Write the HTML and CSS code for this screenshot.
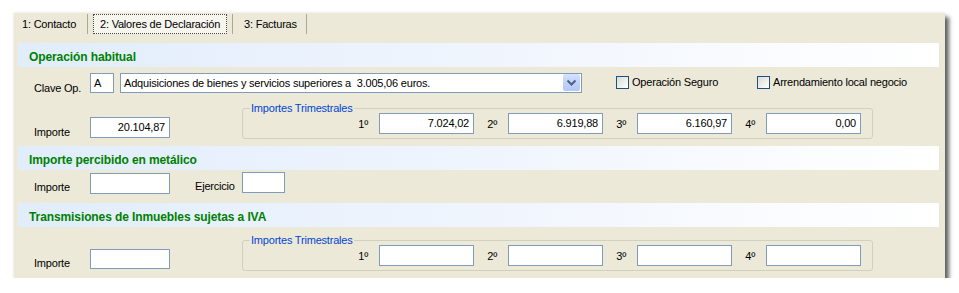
FILE: index.html
```html
<!DOCTYPE html>
<html lang="es">
<head>
<meta charset="utf-8">
<title>Valores de Declaración</title>
<link rel="stylesheet" href="styles.css">
</head>
<body>
<div class="window">
  <div class="tabs">
    <div class="tab tab-first">1: Contacto</div>
    <div class="tab tab-active">2: Valores de Declaración</div>
    <div class="tab tab-last">3: Facturas</div>
  </div>
  <div class="content">
    <div class="section-head">Operación habitual</div>
    <div class="s1-body">
      <div class="row row-clave">
        <div class="lbl lbl-low">Clave Op.</div>
        <div class="field field-code">A</div>
        <div class="combo">
          <span class="combo-text">Adquisiciones de bienes y servicios superiores a&nbsp; 3.005,06 euros.</span>
          <span class="combo-btn"><svg width="17" height="17" viewBox="0 0 17 17"><path d="M4.5 6.5 L8.5 10.5 L12.5 6.5" fill="none" stroke="#4D6185" stroke-width="2"/></svg></span>
        </div>
        <div class="cb cb-first"><span class="cb-box"></span><span class="cb-text">Operación Seguro</span></div>
        <div class="cb"><span class="cb-box"></span><span class="cb-text">Arrendamiento local negocio</span></div>
      </div>
      <div class="row row-importe">
        <div class="lbl">Importe</div>
        <div class="field field-amount field-up1">20.104,87</div>
        <fieldset class="group">
          <legend>Importes Trimestrales</legend>
          <div class="quarters">
            <div class="q-lbl">1º</div><div class="field field-q">7.024,02</div>
            <div class="q-lbl">2º</div><div class="field field-q">6.919,88</div>
            <div class="q-lbl">3º</div><div class="field field-q">6.160,97</div>
            <div class="q-lbl">4º</div><div class="field field-q">0,00</div>
          </div>
        </fieldset>
      </div>
    </div>

    <div class="section-head">Importe percibido en metálico</div>
    <div class="s2-body">
      <div class="lbl">Importe</div>
      <div class="field field-amount"></div>
      <div class="lbl lbl-ej">Ejercicio</div>
      <div class="field field-year"></div>
    </div>

    <div class="section-head">Transmisiones de Inmuebles sujetas a IVA</div>
    <div class="s3-body">
      <div class="lbl lbl-up1">Importe</div>
      <div class="field field-amount field-up2"></div>
      <fieldset class="group">
        <legend>Importes Trimestrales</legend>
        <div class="quarters">
          <div class="q-lbl">1º</div><div class="field field-q"></div>
          <div class="q-lbl">2º</div><div class="field field-q"></div>
          <div class="q-lbl">3º</div><div class="field field-q"></div>
          <div class="q-lbl">4º</div><div class="field field-q"></div>
        </div>
      </fieldset>
    </div>
  </div>
</div>
</body>
</html>
```
FILE: styles.css
```css
html, body {
  margin: 0;
  padding: 0;
  background: #ffffff;
}
body {
  font-family: "Liberation Sans", Arial, sans-serif;
  font-size: 11px;
  letter-spacing: -0.2px;
  color: #000;
}
.window {
  margin: 13px 0 0 14px;
  width: 931px;
  height: 265px;
  box-sizing: border-box;
  background: #ECE9D8;
  box-shadow: 4px 4px 4px rgba(0,0,0,0.6), 0 0 3px rgba(0,0,0,0.12);
}
.tabs {
  height: 22px;
  display: flex;
  align-items: center;
}
.tab {
  height: 20px;
  box-sizing: border-box;
  display: flex;
  align-items: center;
  white-space: nowrap;
}
.tab-first {
  width: 74px;
  padding-left: 8px;
  border-right: 1px solid #ACA899;
}
.tab-active {
  width: 134px;
  margin: 0 5px;
  padding-left: 6px;
  border: 1px dotted #4a4a4a;
  background: #F6F5EE;
}
.tab-last {
  width: 75px;
  padding-left: 11px;
  border-left: 1px solid #ACA899;
  border-right: 1px solid #ACA899;
}
.content {
  padding: 8px 6px 0 4px;
}
.section-head {
  height: 24px;
  box-sizing: border-box;
  padding: 3px 0 0 11px;
  display: flex;
  align-items: center;
  background: linear-gradient(to right, #E1EDFB 0%, #EEF4FD 45%, #FFFFFF 100%);
  color: #008000;
  font-weight: bold;
  font-size: 12px;
  letter-spacing: -0.1px;
}
.s1-body {
  height: 79px;
  box-sizing: border-box;
  padding: 6px 0 0 16px;
}
.row {
  display: flex;
  align-items: flex-end;
}
.row-clave {
  height: 20px;
}
.row-importe {
  height: 53px;
  box-sizing: border-box;
  padding-bottom: 7px;
}
.lbl {
  width: 56px;
  flex: none;
  line-height: 13px;
  white-space: nowrap;
}
.lbl-low { margin-bottom: -2px; }
.lbl-up1 { margin-bottom: 1px; }
.field {
  flex: none;
  box-sizing: border-box;
  height: 21px;
  line-height: 19px;
  border: 1px solid #7F9DB9;
  background: #fff;
  text-align: right;
  padding-right: 4px;
  white-space: nowrap;
}
.field-code {
  width: 24px;
  height: 20px;
  line-height: 18px;
  text-align: left;
  padding-left: 3px;
}
.field-amount { width: 80px; }
.field-up1 { margin-bottom: 1px; }
.field-up2 { margin-bottom: 2px; height: 20px; line-height: 18px; }
.combo {
  flex: none;
  margin-left: 6px;
  width: 462px;
  height: 20px;
  box-sizing: border-box;
  border: 1px solid #7F9DB9;
  background: #fff;
  display: flex;
  align-items: center;
  justify-content: space-between;
  padding: 0 1px 0 3px;
}
.combo-text {
  white-space: pre;
}
.combo-btn {
  width: 17px;
  height: 17px;
  margin-bottom: 1px;
  box-sizing: border-box;
  border-radius: 2px;
  background: linear-gradient(to bottom, #D6E2FD 0%, #C0D2FA 50%, #B4C8F6 100%);
  display: flex;
}
.cb {
  flex: none;
  display: flex;
  align-items: center;
  margin-bottom: 4px;
  height: 13px;
}
.cb-first {
  margin-left: 34px;
  width: 141px;
}
.cb-box {
  width: 13px;
  height: 13px;
  box-sizing: border-box;
  border: 1px solid #1C5180;
  background: linear-gradient(135deg, #DCDCD6 0%, #F4F4F0 70%, #FFFFFF 100%);
}
.cb-text {
  margin-left: 3px;
  line-height: 13px;
  white-space: nowrap;
}
.group {
  flex: none;
  margin: 0 0 0 72px;
  width: 631px;
  box-sizing: border-box;
  border: 1px solid #D0D0BF;
  border-radius: 3px;
  padding: 0 0 4px 7px;
  min-width: 0;
}
.group legend {
  color: #0046D5;
  line-height: 12px;
  padding: 0 1px;
  font-size: 11px;
}
.quarters {
  display: flex;
  align-items: center;
  margin: -1px 0 0 95px;
}
.q-lbl {
  width: 23px;
  margin-right: 11px;
  text-align: right;
  line-height: 13px;
  padding-top: 2px;
}
.field-q {
  width: 95px;
}
.s2-body {
  height: 33px;
  box-sizing: border-box;
  padding: 0 0 9px 16px;
  display: flex;
  align-items: flex-end;
}
.lbl-ej {
  width: 47px;
  margin-left: 25px;
  margin-bottom: 1px;
}
.field-year {
  width: 43px;
  margin-bottom: 1px;
}
.s3-body {
  height: 51px;
  box-sizing: border-box;
  padding: 0 0 7px 16px;
  display: flex;
  align-items: flex-end;
}
```
